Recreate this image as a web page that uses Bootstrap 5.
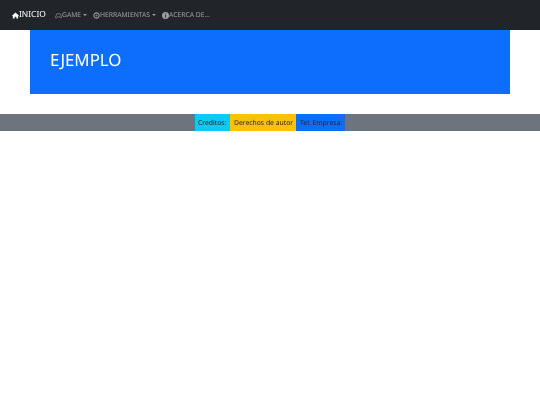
<!DOCTYPE html>
<html lang="es">
<head>
<meta charset="utf-8">
<title>Ejemplo</title>
<link href="https://cdn.jsdelivr.net/npm/bootstrap@5.3.0/dist/css/bootstrap.min.css" rel="stylesheet">
<style>
html, body { background: #fff; }
body { font-family: "Noto Sans", "Open Sans", sans-serif; font-size: 6.8px; line-height: 1.5; text-rendering: geometricPrecision; }
.top-bar { height: 30px; padding: 0 12px; }
.top-bar .nav-link { font-size: 6.75px; padding: 0 3px; color: rgba(255,255,255,.55); display: flex; align-items: center; white-space: nowrap; will-change: transform; }
.top-bar .dropdown-toggle::after { margin-left: 1.5px; border-top-width: 2px; border-right-width: 2px; border-left-width: 2px; border-bottom-width: 0; }
.brand-home { font-size: 8.44px; color: #fff; padding: 0; margin-right: 6.5px; display: flex; align-items: center; text-decoration: none; will-change: transform; }
.nav-ico { width: 7px; height: 7px; flex: none; }
.hero-wrap { padding: 0 30px; margin-bottom: 20px; }
.hero-box { height: 64px; padding: 0 20px; display: flex; align-items: center; }
.hero-title { font-size: 16.875px; font-weight: 400; margin: 0 0 4px; line-height: 1.2; will-change: transform; }
.foot-bar { height: 17px; }
.foot-cell { font-size: 6.8px; padding: 0 3.5px; line-height: 17px; color: #212529; }
.foot-text { display: block; will-change: transform; }
</style>
</head>
<body>
<nav class="navbar navbar-dark bg-dark top-bar d-flex flex-nowrap justify-content-start">
  <a class="brand-home" href="#">
    <svg class="nav-ico" viewBox="0 0 16 16" fill="#fff"><path d="M8 1 0 8.5l1 1L2 8.6V15h4v-4h4v4h4V8.6l1 .9 1-1z"/></svg>INICIO
  </a>
  <ul class="nav flex-nowrap">
    <li class="nav-item"><a class="nav-link dropdown-toggle" href="#">
      <svg class="nav-ico" viewBox="0 0 16 16" fill="none" stroke="currentColor" stroke-width="1.4"><path d="M4 4h8l3 8a1.6 1.6 0 0 1-3 1l-1-2H5l-1 2a1.6 1.6 0 0 1-3-1z"/></svg>GAME</a></li>
    <li class="nav-item"><a class="nav-link dropdown-toggle" href="#">
      <svg class="nav-ico" viewBox="0 0 16 16" fill="none" stroke="currentColor" stroke-width="2.4"><circle cx="8" cy="8" r="6"/><circle cx="8" cy="8" r="1.5" stroke-width="1.4"/></svg>HERRAMIENTAS</a></li>
    <li class="nav-item"><a class="nav-link" href="#">
      <svg class="nav-ico" viewBox="0 0 16 16"><circle cx="8" cy="8" r="8" fill="currentColor"/><rect x="7" y="7" width="2" height="6" fill="#212529"/><rect x="7" y="3.5" width="2" height="2" fill="#212529"/></svg>ACERCA DE...</a></li>
  </ul>
</nav>
<div class="hero-wrap">
  <div class="hero-box bg-primary text-white">
    <h1 class="hero-title">EJEMPLO</h1>
  </div>
</div>
<footer class="foot-bar bg-secondary d-flex justify-content-center">
  <div class="foot-cell bg-info"><span class="foot-text">Creditos:</span></div>
  <div class="foot-cell bg-warning"><span class="foot-text">Derechos de autor</span></div>
  <div class="foot-cell bg-primary"><span class="foot-text">Tel: Empresa:</span></div>
</footer>
<script src="https://cdn.jsdelivr.net/npm/bootstrap@5.3.0/dist/js/bootstrap.bundle.min.js"></script>
</body>
</html>
